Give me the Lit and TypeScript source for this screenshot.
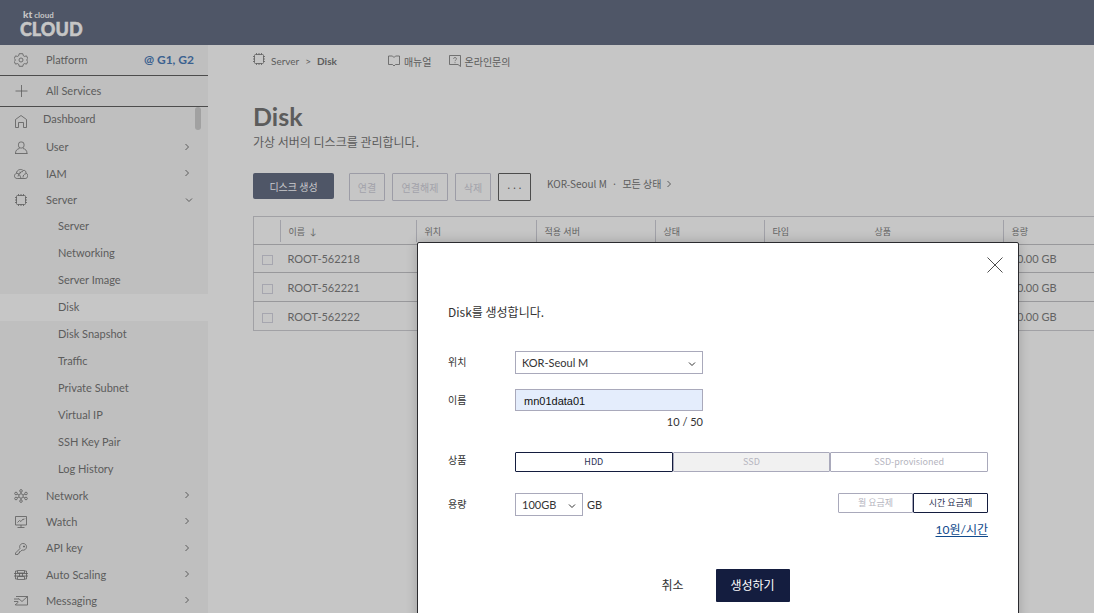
import { LitElement, html, css, svg, nothing } from "lit";
import { customElement, state } from "lit/decorators.js";
import { classMap } from "lit/directives/class-map.js";

const icon = (body: unknown, w = 14, h = 14) => html`<svg
  class="icon" width=${w} height=${h} viewBox="0 0 ${w} ${h}"
  fill="none" stroke="currentColor" stroke-width="0.8" aria-hidden="true">${body}</svg>`;

const gear = icon(svg`<path d="M5.200.7h3.600l.5 2 1.200.7 2-.5 1.300 2.600L12.600 7l1.200 1.500-1.300 2.600-2-.5-1.200.7-.5 2H5.200l-.5-2-1.200-.7-2 .5L.2 8.500 1.500 7 .2 5.500l1.300-2.600 2 .5 1.200-.7z" stroke-linejoin="round"/><circle cx="7" cy="7" r="2"/>`);
const plus = icon(svg`<path d="M7.500 1v12M1.500 7h12"/>`);
const home = icon(svg`<path d="M1.500 13.500V5.500L7 1.500l5.500 4v8H9.500V8.500h-5v5z"/>`);
const user = icon(svg`<rect x="4.500" y="1" width="5.500" height="6" rx="2.200"/><path d="M5.500 7.500C3 8 1.500 9.500 1.500 12.500M9 7.500c2.500.5 4 2 4 5M1 12.500h12.500"/>`);
const cloud = icon(svg`<path d="M3.200 11.500C-.2 11.500-.4 7.200 2.500 6.300 2.500 2.500 7.500 1.500 9 3.500c2-.5 3 .5 3 2.700 2.700.8 2.200 5.300-.8 5.300zM2.500 6.300c2.500-.3 3.500 2 4.500 5M4 9.500c.5-3 2.500-5 5-5M9 10.500c0-2 1-3.500 3-3.800M5.500 5l1.500 1.300"/>`);
const chip = icon(svg`<rect x="2.500" y="2.500" width="9" height="9" rx="1"/><path d="M4.500 1v1.500M7 1v1.500M9.500 1v1.500M4.500 11.500V13M7 11.500V13M9.500 11.500V13M1 4.500h1.500M1 7h1.500M1 9.500h1.500M11.500 4.500H13M11.500 7H13M11.500 9.500H13"/>`);
const network = icon(svg`<circle cx="7" cy="7" r="2.200"/><circle cx="7" cy="1.900" r="1.300"/><circle cx="7" cy="12.100" r="1.300"/><circle cx="2" cy="4.500" r="1.300"/><circle cx="12" cy="4.500" r="1.300"/><circle cx="2" cy="9.500" r="1.300"/><circle cx="12" cy="9.500" r="1.300"/><path d="M7 3.200v1.600M7 9.200v1.600M3.200 5.200l1.800.8M9 6l1.800-.8M3.200 8.800 5 8M9 8l1.800.8"/>`);
const watch = icon(svg`<path d="M1.500 1.500h11v8.500h-11zM7 10v2.500M3.500 12.500h7M3.500 7.500l2-2 1.500 1 2-2.500 1 .5 1-1"/>`);
const key = icon(svg`<path d="M6 6.500C4.800 3.500 7 1.500 9 1.500s3.500 1.300 3.500 3.300-1.800 4-4.500 3.300L6.500 9.500 5.500 9.700v1.300l-1.200.2-.3 1.300H1.500V11zM9.500 4h1v1h-1z"/>`);
const scaling = icon(svg`<path d="M3.500 2.500h7v2.500h-7zM3.500 8.500h7v3h-7zM1.500 3v8M12.500 3v8M0 5.500h14M0 8h14M5.500 5v3M8.500 5v3M1.500 3h2M10.500 3h2M1.500 11h2M10.500 11h2"/>`);
const mail = icon(svg`<path d="M2 2.500h11.500v8.500H1.500M13.500 2.500 8 7.500 4.500 4.500M0 5h5M0 7.500h4M1 11l3.500-3"/>`);
const book = icon(svg`<path d="M6 3.500 4.500 2H.5v8.500h4L6 12l1.500-1.500h4V2h-4z"/>`, 12, 14);
const ask = icon(svg`<path d="M.5 1.500h11v11L9 10.500H.5z"/><path d="M4.500 4.800c0-1.700 3-1.700 3 0C7.500 6 6 6 6 7.200M6 8.200v1" stroke-width="0.700"/>`, 12, 14);
const right = icon(svg`<path d="M1.500 1 4.500 4l-3 3" stroke-width="1"/>`, 6, 8);
const down = icon(svg`<path d="M1 1.500 4 4.500l3-3" stroke-width="1"/>`, 8, 6);
const cross = icon(svg`<path d="M.5.5l15 15M15.500.5l-15 15"/>`, 16, 16);

interface NavItem { label: string; icon: unknown; arrow?: boolean; children?: string[] }

const NAV: NavItem[] = [
  { label: "Dashboard", icon: home },
  { label: "User", icon: user, arrow: true },
  { label: "IAM", icon: cloud, arrow: true },
  {
    label: "Server", icon: chip, arrow: true,
    children: ["Server", "Networking", "Server Image", "Disk", "Disk Snapshot", "Traffic",
      "Private Subnet", "Virtual IP", "SSH Key Pair", "Log History"],
  },
  { label: "Network", icon: network, arrow: true },
  { label: "Watch", icon: watch, arrow: true },
  { label: "API key", icon: key, arrow: true },
  { label: "Auto Scaling", icon: scaling, arrow: true },
  { label: "Messaging", icon: mail, arrow: true },
];

@customElement("side-nav")
export class SideNav extends LitElement {
  static styles = css`
    :host { display: block; width: 208px; flex: none; background: #bfbfbf; color: #5c5c5c; font-size: 11px; overflow: hidden; position: relative; }
    .icon { display: block; flex: none; }
    a { color: inherit; text-decoration: none; display: flex; align-items: center; box-sizing: border-box; line-height: 14px; }
    .top { height: 31px; padding: 0 14px; border-bottom: 1px solid #4c4c4c; }
    .label { margin-left: 18px; flex: 1; padding-bottom: 1px; }
    .label + .icon { margin-bottom: 2px; }
    .open .label + .icon { margin-bottom: 0; }
    .zone { color: #3b618f; font-size: 12px; font-weight: 700; }
    ul { list-style: none; margin: 0; padding: 0; }
    .item { height: 26px; padding: 0 18px 0 14px; }
    .open { padding-right: 15px; }
    .home { height: 27px; }
    .home .label { margin: 0 0 0 15px; padding-bottom: 3px; }
    .sub { height: 27px; padding: 0 0 1px 58px; }
    .gap { height: 27px; }
    .active { background: #c6c6c6; }
    .thumb { position: absolute; right: 7px; top: 62px; width: 6px; height: 23px; border-radius: 3px; background: #a1a1a1; }
  `;
  render() {
    return html`
      <a class="top" href="#platform">${gear}<span class="label">Platform</span><span class="zone">@ G1, G2</span></a>
      <a class="top" href="#all">${plus}<span class="label">All Services</span></a>
      <div class="thumb"></div>
      <ul>
        ${NAV.map((n, i) => html`<li>
          <a class=${classMap({ item: true, home: i === 0, gap: i === 1 || n.label === "API key", open: !!n.children })} href="#">${n.icon}<span class="label">${n.label}</span>${n.arrow ? (n.children ? down : right) : nothing}</a>
          ${n.children ? html`<ul>${n.children.map((c) => html`<li><a class=${classMap({ sub: true, active: c === "Disk" })} href="#">${c}</a></li>`)}</ul>` : nothing}
        </li>`)}
      </ul>`;
  }
}

@customElement("disk-table")
export class DiskTable extends LitElement {
  static styles = css`
    :host { display: block; color: #636363; }
    table { width: 960px; table-layout: fixed; border-collapse: collapse; border: 1px solid #a1a1a5; font-size: 11px; }
    th, td { padding: 0; text-align: left; font-weight: 400; box-sizing: border-box; }
    th { height: 28px; font-size: 9px; vertical-align: middle; }
    td { height: 29px; border-top: 1px solid #98989b; padding-left: 8px; }
    .first td { height: 28px; }
    .head { display: block; box-sizing: border-box; height: 22px; line-height: 20px; padding: 2px 0 0 8px; border-left: 1px solid #a1a1a8; white-space: pre; }
    .plain { border-left-color: transparent; }
    td.check { padding-left: 8px; }
    input { appearance: none; display: block; margin: 3px 0 0; width: 11px; height: 10px; border: 1px solid #a6a6af; }
    .pick { width: 26px; } .name { width: 136px; } .zone { width: 120px; } .host { width: 119px; }
    .status { width: 109px; } .type { width: 102px; } .product { width: 137px; }
  `;
  render() {
    const names = ["ROOT-562218", "ROOT-562221", "ROOT-562222"];
    return html`<table>
      <colgroup><col class="pick"><col class="name"><col class="zone"><col class="host"><col class="status"><col class="type"><col class="product"><col></colgroup>
      <thead><tr>
        <th></th>
        ${["이름  ↓", "위치", "적용 서버", "상태", "타입", "상품", "용량"].map((t) => html`<th scope="col"><span class=${classMap({ head: true, plain: t === "상품" })}>${t}</span></th>`)}
      </tr></thead>
      <tbody>${names.map((n, i) => html`<tr class=${i === 0 ? "first" : ""}>
        <td class="check"><input type="checkbox" aria-label=${n}></td>
        <td>${n}</td><td></td><td></td><td></td><td></td><td></td><td>20.00 GB</td>
      </tr>`)}</tbody>
    </table>`;
  }
}

@customElement("disk-dialog")
export class DiskDialog extends LitElement {
  @state() product = "HDD";
  @state() plan = "시간 요금제";
  @state() name = "mn01data01";

  static styles = css`
    :host { display: block; box-sizing: border-box; width: 602px; height: 400px; padding: 0 30px; background: #fff; border: 1px solid #2a2a2e; border-radius: 2px; color: #333; font-size: 11px; box-shadow: 0 0 12px rgba(0, 0, 0, 0.2); }
    .icon { display: block; }
    button, select, input { font-family: inherit; margin: 0; padding: 0; border-radius: 0; box-sizing: border-box; color: inherit; background: none; }
    .bar { display: flex; justify-content: flex-end; height: 59px; padding-top: 14px; margin-right: -15px; box-sizing: border-box; }
    .close { border: 0; width: 16px; height: 16px; color: #222; }
    .message { margin: 0 0 29px; font-family: "Noto Sans CJK KR", sans-serif; font-size: 12px; line-height: 20px; }
    .row { display: grid; grid-template-columns: 67px 1fr; align-items: start; }
    .row > label, .row > .caption { line-height: 22px; font-family: "Noto Sans CJK KR", sans-serif; font-size: 10px; }
    .picker { display: inline-grid; align-items: center; width: 188px; }
    .picker > * { grid-area: 1 / 1; }
    .picker .icon { justify-self: end; margin: 2px 7px 0 0; pointer-events: none; }
    .size { width: 68px; }
    select { appearance: none; width: 100%; height: 23px; border: 1px solid #a9a9bb; padding: 0 6px; font-size: 11px; }
    input { display: block; width: 188px; height: 22px; margin-top: 15px; border: 1px solid #a9a9bb; background: #e4edfc; padding: 2px 8px 0; font-family: "Liberation Sans", sans-serif; font-size: 11px; color: #111; }
    .namelabel { margin-top: 15px; }
    .count { width: 188px; text-align: right; line-height: 22px; display: block; }
    .products { display: grid; grid-template-columns: repeat(3, 1fr); margin-top: 19px; }
    .caption.product { margin-top: 16px; }
    .option { height: 20px; border: 1px solid #a9a9bb; border-radius: 1px; font-family: "Noto Sans CJK KR", sans-serif; font-size: 9px; line-height: 16px; color: #b5b5c0; }
    .off { background: #f1f1f1; }
    .on { border-color: #141d3f; color: #2c3353; }
    .capacity { margin-top: 21px; }
    .line { display: flex; justify-content: space-between; align-items: flex-start; }
    .amount { display: flex; align-items: center; gap: 4px; }
    .plans { display: grid; grid-template-columns: 75px 75px; }
    .price { display: block; text-align: right; font-size: 12px; line-height: 18px; margin-top: 5px; }
    .price a { color: #104a8c; text-underline-offset: 2px; }
    .actions { display: flex; justify-content: center; gap: 32px; margin-top: 30px; padding-left: 15px; }
    .actions button { font-family: "Noto Sans CJK KR", sans-serif; font-size: 12px; height: 33px; border: 0; padding-bottom: 2px; }
    .actions .submit { width: 74px; background: #141d3f; color: #fff; border-radius: 1px; }
  `;
  render() {
    return html`
      <div class="bar"><button class="close" aria-label="닫기">${cross}</button></div>
      <p class="message">Disk를 생성합니다.</p>
      <div class="row"><label for="zone">위치</label>
        <div class="picker"><select id="zone"><option>KOR-Seoul M</option></select>${down}</div></div>
      <div class="row"><label class="namelabel" for="name">이름</label>
        <div><input id="name" type="text" maxlength="50" .value=${this.name} @input=${(e: Event) => (this.name = (e.target as HTMLInputElement).value)}>
          <span class="count">${this.name.length} / 50</span></div></div>
      <div class="row"><span class="caption product">상품</span>
        <div class="products">${["HDD", "SSD", "SSD-provisioned"].map((p) => html`<button class=${classMap({ option: true, on: p === this.product, off: p === "SSD" })} ?disabled=${p === "SSD"} @click=${() => (this.product = p)}>${p}</button>`)}</div></div>
      <div class="row capacity"><label for="size">용량</label>
        <div>
          <div class="line">
            <div class="amount"><span class="picker size"><select id="size"><option>100GB</option></select>${down}</span>GB</div>
            <div class="plans">${["월 요금제", "시간 요금제"].map((p) => html`<button class=${classMap({ option: true, on: p === this.plan })} @click=${() => (this.plan = p)}>${p}</button>`)}</div>
          </div>
          <span class="price"><a href="#price">10원/시간</a></span>
        </div></div>
      <div class="actions"><button>취소</button><button class="submit">생성하기</button></div>`;
  }
}

@customElement("app-root")
export class AppRoot extends LitElement {
  static styles = css`
    :host { display: flex; flex-direction: column; height: 100vh; overflow: hidden; position: relative; background: #c6c6c6; color: #5c5c5c; font-family: Lato, "Noto Sans CJK KR", sans-serif; font-size: 11px; }
    .icon { display: block; flex: none; }
    header { flex: none; height: 45px; background: #4f5667; box-sizing: border-box; padding: 9px 20px; color: #c6c6c6; }
    .kt { display: flex; align-items: baseline; gap: 2px; font-size: 8px; line-height: 10px; padding-left: 3px; font-weight: 700; }
    .kt b { font-size: 10px; font-weight: 900; }
    .cloud { display: block; font-size: 18px; line-height: 18px; font-weight: 900; -webkit-text-stroke: 0.5px #c6c6c6; }
    .body { flex: 1; min-height: 0; display: flex; }
    main { flex: 1; min-width: 0; overflow: hidden; padding: 7px 0 0 45px; }
    .crumbs { display: flex; align-items: center; height: 18px; font-size: 10px; }
    .crumbs a { color: inherit; text-decoration: none; display: flex; align-items: center; gap: 4px; }
    .crumbs .sep { margin: 0 6px; }
    .chip { margin: 0 5px 4px -1px; }
    .crumbs .manual { margin-left: 51px; }
    .crumbs .inquiry { margin-left: 17px; }
    h1 { margin: 31px 0 0; font-size: 25px; line-height: 30px; font-weight: 700; }
    .lead { margin: 1px 0 0; font-size: 12px; line-height: 20px; font-family: "Noto Sans CJK KR", sans-serif; }
    .tools { display: flex; align-items: flex-start; gap: 7px; margin: 21px 0 15px; }
    button { font-family: "Noto Sans CJK KR", sans-serif; font-size: 10px; height: 28px; width: 36px; padding: 0; border: 1px solid #9c9ca6; border-radius: 1px; background: none; color: #a2a2aa; }
    .tools .wide { width: 56px; }
    .tools .create { height: 26px; width: 81px; border: 0; border-radius: 2px; background: #4f5667; color: #c9c9cc; margin-right: 8px; }
    .tools .more { width: 33px; border-color: #4c4c4c; color: #4c4c4c; }
    .filter { display: flex; align-items: center; gap: 5px; margin-left: 9px; line-height: 22px; font-family: "Noto Sans CJK KR", sans-serif; font-size: 10px; color: inherit; text-decoration: none; }
    disk-dialog { position: absolute; left: 417px; top: 242px; }
  `;
  render() {
    return html`
      <header><span class="kt"><b>kt</b><span>cloud</span></span><span class="cloud">CLOUD</span></header>
      <div class="body">
        <side-nav></side-nav>
        <main>
          <nav class="crumbs">
            <span class="chip">${chip}</span><a href="#server">Server</a><span class="sep">&gt;</span><b>Disk</b>
            <a class="manual" href="#manual">${book}매뉴얼</a>
            <a class="inquiry" href="#inquiry">${ask}온라인문의</a>
          </nav>
          <h1>Disk</h1>
          <p class="lead">가상 서버의 디스크를 관리합니다.</p>
          <div class="tools">
            <button class="create">디스크 생성</button>
            <button disabled>연결</button><button class="wide" disabled>연결해제</button><button disabled>삭제</button>
            <button class="more" aria-label="더보기">···</button>
            <a class="filter" href="#filter"><span>KOR-Seoul M</span><span>·</span><span>모든 상태</span>${right}</a>
          </div>
          <disk-table></disk-table>
        </main>
      </div>
      <disk-dialog role="dialog" aria-label="Disk 생성"></disk-dialog>`;
  }
}
